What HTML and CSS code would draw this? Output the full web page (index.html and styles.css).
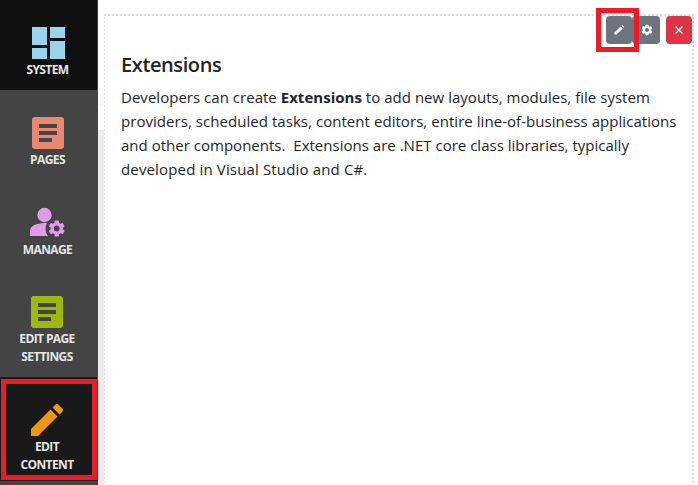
FILE: index.html
```html
<!DOCTYPE html>
<html lang="en">
<head>
<meta charset="utf-8">
<title>Extensions</title>
<link rel="stylesheet" href="styles.css">
</head>
<body>
<div class="app">
  <nav class="sidebar">
    <a class="item system">
      <svg class="icon" viewBox="0 0 34 34"><path fill="#9bd3ed" d="M1 1h15v18H1zM19 1h15v11H19zM1 22h15v11H1zM19 15h15v18H19z"/></svg>
      <span>SYSTEM</span>
    </a>
    <a class="item pages">
      <svg class="icon" viewBox="0 0 34 34"><rect x="1" y="1" width="32" height="32" rx="3" fill="#e68970"/><path fill="#444" d="M8 8h18v4H8zM8 15h18v4H8zM8 22h13v4H8z"/></svg>
      <span>PAGES</span>
    </a>
    <a class="item manage">
      <svg class="icon wide" viewBox="0 0 38 34"><circle cx="15.500" cy="9" r="7.200" fill="#df9ce9"/><path fill="#df9ce9" d="M1 30v-5c0-6 8-8 15.500-8h1.500c-2 4-2 9 1 13z"/><circle cx="27.700" cy="22.500" r="10.200" fill="#444"/><g transform="translate(17.700 12.500) scale(.835)"><path fill="#df9ce9" d="M19.140 12.940c.04-.3.060-.610.060-.940 0-.320-.020-.640-.070-.940l2.030-1.580a.49.49 0 0 0 .120-.610l-1.920-3.320a.488.488 0 0 0-.590-.220l-2.390.960c-.5-.380-1.030-.7-1.620-.940l-.360-2.540a.484.484 0 0 0-.480-.410h-3.840c-.240 0-.430.170-.470.410l-.360 2.540c-.590.240-1.130.570-1.620.940l-2.390-.960c-.220-.080-.470 0-.590.220L2.740 8.870c-.120.210-.080.470.120.610l2.030 1.580c-.050.3-.090.630-.090.940s.020.640.070.940l-2.030 1.580a.49.49 0 0 0-.120.610l1.920 3.320c.120.220.370.290.590.220l2.390-.960c.5.380 1.030.7 1.620.940l.360 2.540c.050.240.240.410.480.410h3.840c.240 0 .440-.170.470-.410l.360-2.540c.590-.240 1.130-.560 1.620-.940l2.390.960c.220.080.470 0 .590-.220l1.920-3.320c.120-.220.070-.470-.120-.610l-2.010-1.580zM12 15.600c-1.980 0-3.600-1.620-3.600-3.600s1.620-3.600 3.600-3.600 3.600 1.620 3.600 3.600-1.620 3.600-3.600 3.600z"/></g></svg>
      <span>MANAGE</span>
    </a>
    <a class="item page-settings">
      <svg class="icon" viewBox="0 0 34 34"><rect x="1" y="1" width="32" height="32" rx="3" fill="#9db90c"/><path fill="#444" d="M8 8h18v4H8zM8 15h18v4H8zM8 22h13v4H8z"/></svg>
      <span>EDIT PAGE</span><span>SETTINGS</span>
    </a>
    <a class="item edit-content">
      <svg class="icon" viewBox="0 0 34 34"><path fill="#ef960f" d="M1 33v-7L20.500 6.500l7 7L8 33zM22.500 4.500l2.800-2.800a2.200 2.200 0 0 1 3.200 0l3.800 3.800a2.200 2.200 0 0 1 0 3.200l-2.800 2.800z"/></svg>
      <span>EDIT</span><span>CONTENT</span>
      <i class="mark mark-item"></i>
    </a>
  </nav>
  <div class="gutter"></div>
  <main class="content">
    <div class="toolbar">
      <button class="btn edit"><svg viewBox="0 0 12 12"><path fill="#fff" d="M1.500 10.500V8.500L7.700 2.400l2 2L3.500 10.500zM8.300 1.800l.4-.4a.8.8 0 0 1 1.100 0l.9.9a.8.8 0 0 1 0 1.100l-.4.4z"/></svg><i class="mark mark-button"></i></button>
      <button class="btn settings"><svg viewBox="0 0 12 12"><path fill="#fff" fill-rule="evenodd" d="M4.800.7h2.400l.4 1.500.9.500 1.500-.4 1.200 2-1 1.100v1.200l1 1.100-1.200 2-1.500-.4-.9.500-.4 1.500H4.800l-.4-1.500-.9-.5-1.500.4-1.200-2 1-1.100V5.400l-1-1.100 1.200-2 1.500.4.9-.5zM6 4a2 2 0 1 0 0 4 2 2 0 0 0 0-4z"/></svg></button>
      <button class="btn remove"><svg viewBox="0 0 12 12"><path stroke="#fff" stroke-width="1.300" d="M2.500 2.500l7 7M9.500 2.500l-7 7"/></svg></button>
    </div>
    <h1>Extensions</h1>
    <p>
      <span class="line l1">Developers can create <b>Extensions</b> to add new layouts, modules, file system</span>
      <span class="line l2">providers, scheduled tasks, content editors, entire line-of-business applications</span>
      <span class="line l3">and other components.&nbsp; Extensions are .NET core class libraries, typically</span>
      <span class="line l4">developed in Visual Studio and C#.</span>
    </p>
  </main>
</div>
</body>
</html>
```
FILE: styles.css
```css
* { box-sizing: border-box; }
body { margin: 0; background: #fff; overflow: hidden; font-family: "Open Sans", "Noto Sans", sans-serif; color: #212529; }
.app { display: flex; width: 698px; height: 485px; }
.sidebar { width: 98px; flex: none; display: flex; flex-direction: column; background: #444; }
.item { display: flex; flex-direction: column; align-items: center; width: 98px; padding: 26px 3px 0 0; font-size: 12px; font-weight: 700; line-height: 18px; letter-spacing: -.6px; color: #e6e6e6; }
.icon { width: 34px; height: 34px; flex: none; display: block; margin-bottom: 1px; }
.wide { width: 38px; }
.system { width: 97px; height: 90px; background: #101010; padding-right: 2px; }
.pages { height: 90px; }
.manage { height: 90px; }
.page-settings { height: 107px; padding: 25px 4px 0 0; }
.edit-content { position: relative; width: 97px; height: 104px; background: #191919; }
.mark { position: absolute; border: 5px solid #ed1c24; pointer-events: none; }
.mark-item { left: 1px; top: 2px; width: 96px; height: 101px; }
.gutter { width: 6px; flex: none; background: linear-gradient(#fff 96px, #f8f9fa 96px 106px, #fff 106px 130px, #ececec 130px); }
.content { width: 590px; height: 469px; margin-top: 14px; padding: 2px 2px 0 17px;
  background:
    repeating-linear-gradient(to right, #ddd 0 2px, transparent 2px 4px) 0 0 / 100% 2px no-repeat,
    repeating-linear-gradient(transparent 0 2px, #ddd 2px 4px) 0 1px / 1px 100% no-repeat,
    repeating-linear-gradient(transparent 0 2px, #ddd 2px 4px) 100% 1px / 2px 100% no-repeat; }
.toolbar { display: flex; justify-content: flex-end; height: 28px; }
.btn { display: flex; align-items: center; justify-content: center; height: 28px; padding: 0; border: 0; border-radius: 4px; background: #6c757d; }
.btn svg { width: 12px; height: 12px; display: block; fill: none; }
.edit { position: relative; width: 26px; }
.settings { width: 28px; margin-right: 6px; }
.settings svg { margin-left: 2px; }
.remove { width: 26px; background: #dc3545; }
.mark-button { left: -10px; top: -8px; width: 43px; height: 44px; z-index: 1; }
h1 { margin: 9px 0 8px; font-size: 20px; line-height: 24px; font-weight: 600; letter-spacing: -.4px; }
p { margin: 0; font-size: 15px; line-height: 24px; }
.line { display: block; white-space: nowrap; width: max-content; }
.l1 { letter-spacing: .026px; }
.l2 { letter-spacing: .05px; }
.l3 { letter-spacing: .014px; }
.l4 { letter-spacing: .15px; }
```
